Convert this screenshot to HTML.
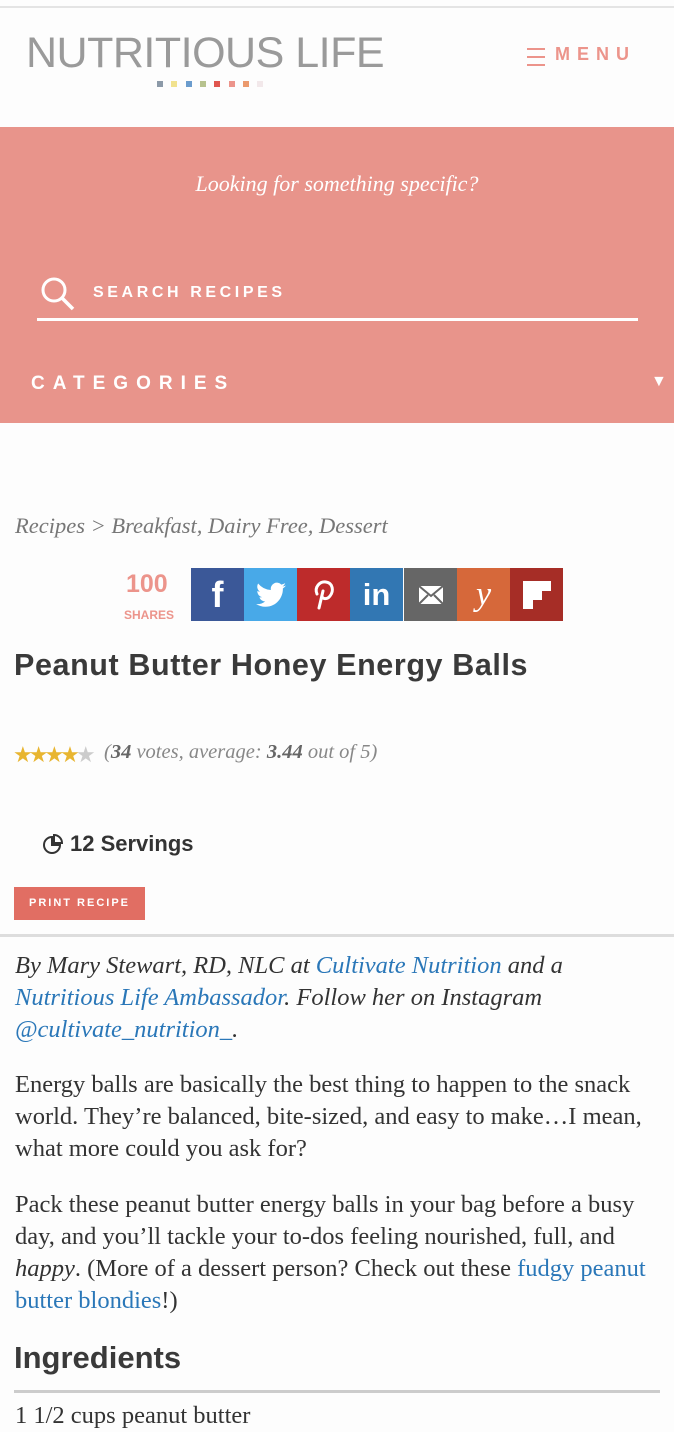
<!DOCTYPE html>
<html><head><meta charset="utf-8"><style>
*{margin:0;padding:0;box-sizing:border-box}
body{width:674px;height:1414px;background:#fdfdfd;position:relative;overflow:hidden;font-family:"Liberation Sans",sans-serif;color:#333}
.a{position:absolute;white-space:nowrap}
.serif{font-family:"Liberation Serif",serif}
a{color:#2a77b8;text-decoration:none}
.sq{position:absolute;top:81px;width:6px;height:6px}
.sb{position:absolute;top:568px;width:53px;height:53px;display:flex;align-items:center;justify-content:center;color:#fff}
p.t{position:absolute;left:15px;font-family:"Liberation Serif",serif;font-size:24.5px;line-height:32px;color:#333;white-space:nowrap}
</style></head><body>
<div class="a" style="top:6px;left:0;width:674px;height:2px;background:#e4e4e4"></div>
<div class="a" style="left:26px;top:29px;font-size:43px;color:#9a9a9a;letter-spacing:-0.5px">NUTRITIOUS LIFE</div>
<div class="sq" style="left:157px;background:#8c9aa8"></div>
<div class="sq" style="left:171px;background:#f1e28e"></div>
<div class="sq" style="left:186px;background:#6b9ccd"></div>
<div class="sq" style="left:200px;background:#b7c28e"></div>
<div class="sq" style="left:214px;background:#e0564f"></div>
<div class="sq" style="left:229px;background:#ec948b"></div>
<div class="sq" style="left:243px;background:#eb9a6d"></div>
<div class="sq" style="left:257px;background:#f2e8ea"></div>
<div class="a" style="left:527px;top:48px;width:18px;height:2px;background:#ec948b;box-shadow:0 8px 0 #ec948b,0 16px 0 #ec948b"></div>
<div class="a" style="left:555px;top:44px;font-size:18px;font-weight:bold;letter-spacing:7px;color:#ec948b">MENU</div>
<div class="a" style="top:127px;left:0;width:674px;height:296px;background:#e8948b"></div>
<div class="a serif" style="top:171px;left:0;width:674px;text-align:center;font-style:italic;font-size:22px;color:#fff">Looking for something specific?</div>
<svg class="a" style="left:40px;top:276px" width="36" height="36" viewBox="0 0 36 36"><circle cx="14" cy="14" r="11" fill="none" stroke="#fff" stroke-width="3"/><line x1="22" y1="22" x2="33" y2="33" stroke="#fff" stroke-width="3.5"/></svg>
<div class="a" style="left:93px;top:284px;font-size:16px;font-weight:bold;letter-spacing:3.6px;color:#fff">SEARCH RECIPES</div>
<div class="a" style="left:37px;top:318px;width:601px;height:3px;background:#fff"></div>
<div class="a" style="left:31px;top:373px;font-size:19px;font-weight:bold;letter-spacing:8px;color:#fff">CATEGORIES</div>
<div class="a" style="left:651px;top:373px;font-size:16px;color:#fff">▼</div>
<div class="a serif" style="left:15px;top:513px;font-style:italic;font-size:22.5px;color:#777">Recipes &gt; Breakfast, Dairy Free, Dessert</div>
<div class="a" style="left:126px;top:570px;font-size:25px;font-weight:bold;color:#ec948b">100</div>
<div class="a" style="left:124px;top:608px;font-size:12px;font-weight:bold;color:#ec948b">SHARES</div>
<div class="sb" style="left:191px;background:#3b5898;font-size:36px;font-weight:bold">f</div>
<div class="sb" style="left:244px;background:#48a9e8"><svg width="30" height="26" viewBox="0 0 24 20"><path fill="#fff" d="M24 2.4a10 10 0 0 1-2.8.8 5 5 0 0 0 2.2-2.7 10 10 0 0 1-3.1 1.2A4.9 4.9 0 0 0 11.9 6 14 14 0 0 1 1.7.8a4.9 4.9 0 0 0 1.5 6.6A5 5 0 0 1 1 6.8a4.9 4.9 0 0 0 3.9 4.9 5 5 0 0 1-2.2.1 4.9 4.9 0 0 0 4.6 3.4A9.9 9.9 0 0 1 0 17.2 14 14 0 0 0 7.5 19.4c9 0 14-7.5 14-14v-.6A10 10 0 0 0 24 2.4z"/></svg></div>
<div class="sb" style="left:297px;background:#bd2b2b"><svg width="24" height="32" viewBox="0 0 24 32"><path d="M7 29 L11 12 M5 15 C2 8 8 2 14 3 C21 4 22 12 18 17 C15 21 10 20 10 17" fill="none" stroke="#fff" stroke-width="3" stroke-linecap="round"/></svg></div>
<div class="sb" style="left:350px;background:#3277b3;font-size:31px;font-weight:bold">in</div>
<div class="sb" style="left:404px;background:#666"><svg width="26" height="20" viewBox="0 0 26 20"><rect x="1" y="1" width="24" height="18" fill="#fff"/><path d="M1 1l12 10L25 1M1 19l9-9M25 19l-9-9" stroke="#666" stroke-width="2" fill="none"/></svg></div>
<div class="sb" style="left:457px;background:#d6683a;font-family:'Liberation Serif',serif;font-style:italic;font-size:34px">y</div>
<div class="sb" style="left:510px;background:#a62d26"><svg width="28" height="28" viewBox="0 0 28 28"><path fill="#fff" d="M0 0h28v10H19v9H10v9H0z"/></svg></div>
<div class="a" style="left:14px;top:648px;font-size:30.5px;font-weight:bold;color:#3a3a3a;letter-spacing:0.6px">Peanut Butter Honey Energy Balls</div>
<div class="a" style="left:13px;top:742px;font-size:22px;letter-spacing:-4px;color:#e8b530">★★★★<span style="color:#ccc">★</span></div>
<div class="a serif" style="left:104px;top:741px;font-style:italic;font-size:20.5px;color:#888">(<b style="color:#666">34</b> votes, average: <b style="color:#666">3.44</b> out of 5)</div>
<svg class="a" style="left:42px;top:834px" width="22" height="22" viewBox="0 0 22 22"><path d="M10 3a8 8 0 1 0 8 8h-8z" fill="none" stroke="#333" stroke-width="2"/><path d="M12 1v8h8a8 8 0 0 0-8-8z" fill="none" stroke="#333" stroke-width="2"/></svg>
<div class="a" style="left:70px;top:831px;font-size:22px;font-weight:bold;color:#333">12 Servings</div>
<div class="a" style="left:14px;top:887px;width:131px;height:33px;background:#e16e63;color:#fff;font-size:11px;font-weight:bold;letter-spacing:2px;line-height:33px;text-align:center">PRINT RECIPE</div>
<div class="a" style="left:0;top:934px;width:674px;height:3px;background:#ddd"></div>
<p class="t" style="top:950px;font-style:italic">By Mary Stewart, RD, NLC at <a>Cultivate Nutrition</a> and a<br><a>Nutritious Life Ambassador</a>. Follow her on Instagram<br><a>@cultivate_nutrition_</a>.</p>
<p class="t" style="top:1069px">Energy balls are basically the best thing to happen to the snack<br>world. They’re balanced, bite-sized, and easy to make…I mean,<br>what more could you ask for?</p>
<p class="t" style="top:1189px">Pack these peanut butter energy balls in your bag before a busy<br>day, and you’ll tackle your to-dos feeling nourished, full, and<br><i>happy</i>. (More of a dessert person? Check out these <a>fudgy peanut</a><br><a>butter blondies</a>!)</p>
<div class="a" style="left:14px;top:1340px;font-size:31px;font-weight:bold;color:#3a3a3a">Ingredients</div>
<div class="a" style="left:14px;top:1390px;width:646px;height:3px;background:#ccc"></div>
<p class="t" style="top:1400px">1 1/2 cups peanut butter</p>
</body></html>
